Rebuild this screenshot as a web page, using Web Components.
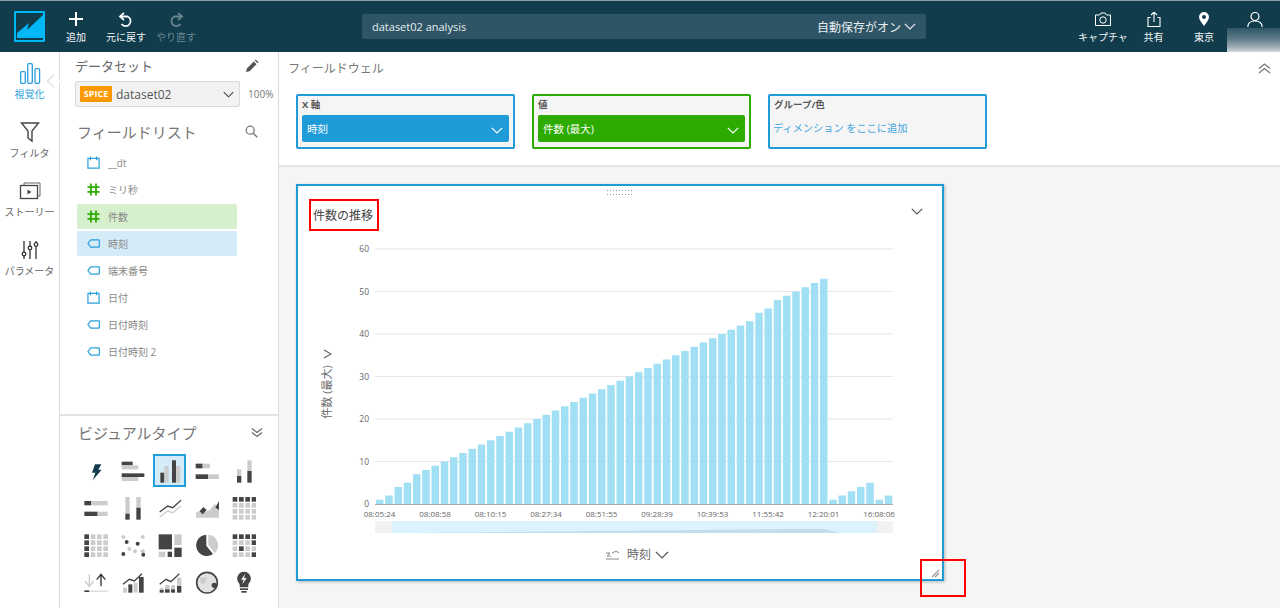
<!DOCTYPE html>
<html lang="ja">
<head>
<meta charset="utf-8">
<title>dataset02 analysis</title>
<style>
    html, body { margin: 0; height: 608px; overflow: hidden; background: #fff; }
    body { font-family: "Open Sans", "Noto Sans CJK JP", sans-serif; color: #555; }
</style>
</head>
<body>
<qs-app>
    <app-header slot="header">
        <header-btn icon="plus">追加</header-btn>
        <header-btn icon="undo">元に戻す</header-btn>
        <header-btn icon="redo" off>やり直す</header-btn>
        <title-bar slot="title">dataset02 analysis</title-bar>
        <header-btn slot="right" icon="camera">キャプチャ</header-btn>
        <header-btn slot="right" icon="share">共有</header-btn>
        <header-btn slot="right" icon="pin">東京</header-btn>
        <header-btn slot="right" icon="user"></header-btn>
    </app-header>
    <side-rail slot="rail">
        <rail-item icon="visual" active>視覚化</rail-item>
        <rail-item icon="filter">フィルタ</rail-item>
        <rail-item icon="story">ストーリー</rail-item>
        <rail-item icon="params">パラメータ</rail-item>
    </side-rail>
    <data-panel slot="panel">
        <field-row icon="date">__dt</field-row>
        <field-row icon="hash">ミリ秒</field-row>
        <field-row icon="hash" mark="green">件数</field-row>
        <field-row icon="tag" mark="blue">時刻</field-row>
        <field-row icon="tag">端末番号</field-row>
        <field-row icon="date">日付</field-row>
        <field-row icon="tag">日付時刻</field-row>
        <field-row icon="tag">日付時刻 2</field-row>
        <visual-types slot="visual"></visual-types>
    </data-panel>
    <field-wells slot="wells">
        <well-box label="X 軸" pill="時刻"></well-box>
        <well-box label="値" pill="件数 (最大)" green></well-box>
        <well-box label="グループ/色" hint="ディメンション をここに追加"></well-box>
    </field-wells>
    <chart-card slot="canvas">
        <note-box style="left:11px;top:13px;width:70px;height:32px"></note-box>
        <note-box style="left:622px;top:373px;width:46px;height:38px"></note-box>
    </chart-card>
</qs-app>

<script>
    function shadow(el, html) {
        el.attachShadow({ mode: 'open' }).innerHTML = html;
    }

    function chevron(w, color) {
        return `<svg width="${w}" height="${Math.round(w * 0.6)}" viewBox="0 0 12 7" fill="none" stroke="${color}" stroke-width="1.2"><path d="M.8 .8 6 6 11.2 .8"/></svg>`;
    }

    // icons of the top bar
    const topIcons = {
        plus: '<path d="M8 0v14M1 7h14" stroke-width="2"/>',
        undo: '<path d="M2.500 4.500H9.500a5 5 0 1 1-6 7.500" stroke-width="1.800"/><path d="M6 .8 2 4.500 6 8.200" stroke-width="1.800"/>',
        redo: '<path d="M13.500 4.500H6.500a5 5 0 1 0 6 7.500" stroke-width="1.800"/><path d="M10 .8 14 4.500 10 8.200" stroke-width="1.800"/>',
        camera: '<path d="M.5 3h4l1.500-2h4l1.500 2h4v10.500H.5z" stroke-width="1"/><circle cx="8" cy="8" r="3.200" stroke-width="1"/>',
        share: '<path d="M4.500 5.500H2v9h12v-9h-2.500M8 10V.5M5 3l3-3 3 3" stroke-width="1.100"/>',
        pin: '<path fill="#fff" stroke="none" fill-rule="evenodd" d="M8 0a5 5 0 0 1 5 5c0 3-3 6-5 9-2-3-5-6-5-9a5 5 0 0 1 5-5zm0 3a2 2 0 1 0 0 4 2 2 0 0 0 0-4z"/>',
        user: '<circle cx="8" cy="4.500" r="4" stroke-width="1.200"/><path d="M.8 15c0-4 3-6 7.200-6s7.200 2 7.200 6" stroke-width="1.200"/>'
    };

    // icons of the left rail, viewBox 24x24
    const railIcons = {
        visual: '<g fill="none" stroke="#2aa0dc" stroke-width="1.300"><rect x="2.700" y="10.700" width="4.600" height="11.600" rx="1"/><rect x="9.700" y="2.700" width="4.600" height="19.600" rx="1"/><rect x="17" y="7.700" width="4.600" height="14.600" rx="1"/></g>',
        filter: '<path d="M3.500 3h17l-6.500 8v10l-4-3v-7z" fill="none" stroke="#444" stroke-width="1.400"/>',
        story: '<path d="M6 6V4h16v13h-2" fill="none" stroke="#666" stroke-width="1"/><rect x="2.500" y="6.500" width="17" height="13" fill="none" stroke="#444" stroke-width="1.300"/><path d="M9.500 10.500v5l4-2.500z" fill="#444"/>',
        params: '<g fill="none" stroke="#333" stroke-width="1.300"><path d="M6 3v18M12 3v18M18 3v18"/><circle cx="6" cy="16" r="1.800" fill="#fff"/><circle cx="12" cy="10" r="1.800" fill="#fff"/><circle cx="18" cy="6.500" r="1.800" fill="#fff"/></g>'
    };

    // field type icons, viewBox 14x14
    const fieldIcons = {
        date: '<path d="M1 2.500h12v10.500H1zM3.700 .5v4M10.300 .5v4" fill="none" stroke="#2aa0dc" stroke-width="1.300"/>',
        hash: '<path d="M4.300 .5v13M9.700 .5v13M.5 4.500h13M.5 9.500h13" fill="none" stroke="#2eab00" stroke-width="1.900"/>',
        tag: '<path d="M4 3h8.500a.8 .8 0 0 1 .8 .8v6.400a.8 .8 0 0 1-.8 .8H4L1 7z" fill="none" stroke="#2aa0dc" stroke-width="1.300"/>'
    };

    class QsApp extends HTMLElement {
        constructor() {
            super();
            shadow(this, `<style>
                :host { display: flex; flex-direction: column; width: 1280px; height: 608px; }
                .body { flex: 1; display: flex; min-height: 0; }
                .main { flex: 1; display: flex; flex-direction: column; min-width: 0; }
                .canvas { flex: 1; background: #f5f5f5; padding: 17px; }
            </style>
            <slot name="header"></slot>
            <div class="body">
                <slot name="rail"></slot>
                <slot name="panel"></slot>
                <div class="main">
                    <slot name="wells"></slot>
                    <div class="canvas"><slot name="canvas"></slot></div>
                </div>
            </div>`);
        }
    }
    customElements.define('qs-app', QsApp);

    class AppHeader extends HTMLElement {
        constructor() {
            super();
            shadow(this, `<style>
                :host { display: flex; height: 51px; flex: none; background: #103c4c; border-top: 1px solid #8b9da3; position: relative; }
                .logo { width: 31px; height: 31px; margin: 10px 6px 0 14px; flex: none; }
                .left { display: flex; width: 150px; flex: none; }
                .mid { margin-left: 161px; width: 564px; flex: none; }
                .right { margin-left: auto; display: flex; }
                .blur { position: absolute; right: 0; top: 27px; width: 53px; height: 27px; background: linear-gradient(#2f5767 0%, #5d7b87 40%, #a9b8be 75%, #f4f6f7 100%); }
            </style>
            <svg class="logo" viewBox="0 0 31 31"><rect width="31" height="31" rx="1" fill="#00b8f5"/><rect x="2" y="2" width="27" height="27" fill="#103c4c"/><path d="M3 22 15 12l-2 7L29 4v23H3z" fill="#00b8f5"/></svg>
            <div class="left"><slot></slot></div>
            <div class="mid"><slot name="title"></slot></div>
            <div class="right"><slot name="right"></slot></div>
            <div class="blur"></div>`);
        }
    }
    customElements.define('app-header', AppHeader);

    class HeaderBtn extends HTMLElement {
        constructor() {
            super();
            const off = this.hasAttribute('off');
            const color = off ? '#6d8791' : '#fff';
            shadow(this, `<style>
                :host { display: flex; flex-direction: column; align-items: center; width: 50.6px; padding-top: 11px; font-size: 10px; line-height: 12px; color: ${off ? '#6d8791' : '#f2f5f6'}; white-space: nowrap; }
                svg { display: block; width: 16px; height: 16px; margin-bottom: 3px; }
            </style>
            <svg viewBox="0 0 16 16" fill="none" stroke="${color}">${topIcons[this.getAttribute('icon')]}</svg>
            <slot></slot>`);
        }
    }
    customElements.define('header-btn', HeaderBtn);

    class TitleBar extends HTMLElement {
        constructor() {
            super();
            shadow(this, `<style>
                :host { display: flex; align-items: center; height: 25px; margin-top: 13px; padding: 0 10px; background: #2e5565; border-radius: 2px; font-size: 11px; color: #e8eef0; }
                .save { margin-left: auto; display: flex; align-items: center; gap: 3px; font-size: 12px; }
            </style>
            <slot></slot>
            <span class="save">自動保存がオン ${chevron(12, '#e8eef0')}</span>`);
        }
    }
    customElements.define('title-bar', TitleBar);

    class SideRail extends HTMLElement {
        constructor() {
            super();
            shadow(this, `<style>
                :host { display: block; width: 59px; flex: none; padding-top: 5px; border-right: 1px solid #dcdcdc; box-sizing: content-box; position: relative; }
                .notch { position: absolute; right: -1px; top: 24px; width: 9px; height: 9px; background: #fff; border-left: 1px solid #dcdcdc; border-bottom: 1px solid #dcdcdc; transform: translateX(-1px) rotate(45deg); }
            </style>
            <slot></slot><div class="notch"></div>`);
        }
    }
    customElements.define('side-rail', SideRail);

    class RailItem extends HTMLElement {
        constructor() {
            super();
            shadow(this, `<style>
                :host { display: flex; flex-direction: column; align-items: center; height: 59px; font-size: 10px; line-height: 14px; white-space: nowrap; color: ${this.hasAttribute('active') ? '#2aa0dc' : '#666'}; }
                svg { display: block; width: 24px; height: 24px; margin: 4px 0 2px; }
            </style>
            <svg viewBox="0 0 24 24">${railIcons[this.getAttribute('icon')]}</svg>
            <slot></slot>`);
        }
    }
    customElements.define('rail-item', RailItem);

    class DataPanel extends HTMLElement {
        constructor() {
            super();
            shadow(this, `<style>
                :host { display: flex; flex-direction: column; width: 218px; flex: none; border-right: 1px solid #dcdcdc; box-sizing: content-box; }
                .head { display: flex; align-items: center; justify-content: space-between; height: 27px; margin-bottom: 2px; padding: 0 19px 0 15px; font-size: 13px; color: #666; }
                .row { display: flex; align-items: center; padding-left: 15px; }
                .select { width: 165px; height: 26px; box-sizing: border-box; display: flex; align-items: center; background: #f2f2f2; border: 1px solid #dadada; border-radius: 2px; padding: 0 5px 0 4px; font-size: 12px; color: #555; }
                .spice { background: #ff9900; color: #fff; font-size: 9px; font-weight: 700; line-height: 16px; width: 32px; text-align: center; border-radius: 1px; margin-right: 4px; }
                .select svg { margin-left: auto; }
                .pct { font-size: 10px; color: #777; margin-left: 8px; }
                .list-head { display: flex; align-items: center; justify-content: space-between; height: 43px; padding: 6px 20px 0 17px; font-size: 15px; color: #777; box-sizing: border-box; }
                .list { flex: 1; display: flex; flex-direction: column; gap: 2px; padding-left: 17px; }
            </style>
            <div class="head"><span>データセット</span>
                <svg width="14" height="14" viewBox="0 0 14 14"><path d="M1 13l.8-3.500 7-7 2.700 2.700-7 7zM9.800 1.500l1-1 2.700 2.700-1 1z" fill="#555"/></svg></div>
            <div class="row"><div class="select"><span class="spice">SPICE</span>dataset02 ${chevron(11, '#444')}</div><span class="pct">100%</span></div>
            <div class="list-head"><span>フィールドリスト</span>
                <svg width="13" height="13" viewBox="0 0 13 13" fill="none" stroke="#777" stroke-width="1.300"><circle cx="5.200" cy="5.200" r="4"/><path d="M8.200 8.200 12.300 12.300"/></svg></div>
            <div class="list"><slot></slot></div>
            <slot name="visual"></slot>`);
        }
    }
    customElements.define('data-panel', DataPanel);

    class FieldRow extends HTMLElement {
        constructor() {
            super();
            const bg = { green: '#d6efcc', blue: '#d4ebf8' }[this.getAttribute('mark')] || 'transparent';
            shadow(this, `<style>
                :host { display: flex; align-items: center; width: 160px; height: 25px; flex: none; padding-left: 10px; box-sizing: border-box; background: ${bg}; border-radius: 2px; font-size: 10px; color: #888; }
                svg { width: 13px; height: 13px; margin-right: 8px; flex: none; }
            </style>
            <svg viewBox="0 0 14 14">${fieldIcons[this.getAttribute('icon')]}</svg><slot></slot>`);
        }
    }
    customElements.define('field-row', FieldRow);

    // chart type gallery, all coordinates are in a 3x space (one cell = 111 units)
    const D = '#444', L = '#ccc';
    const r = (x1, y1, x2, y2, c) => `<rect x="${x1}" y="${y1}" width="${x2 - x1}" height="${y2 - y1}" fill="${c}"/>`;
    const dot = (x, y, c, s = 6) => `<circle cx="${x}" cy="${y}" r="${s}" fill="${c}"/>`;
    const line = (p, c, w = 4) => `<polyline points="${p}" fill="none" stroke="${c}" stroke-width="${w}"/>`;
    function tiles(x, y, darkTest) {
        let out = '';
        for (let row = 0; row < 4; row++) {
            for (let col = 0; col < 4; col++) {
                out += r(x + col * 19, y + row * 18, x + col * 19 + 14, y + row * 18 + 14, darkTest(row, col) ? D : L);
            }
        }
        return out;
    }
    const visuals = [
        '<path d="M102 160H121L112 176H122L95 208 103 185H93z" fill="#103c4c"/>',
        r(182, 152, 215, 163, D) + r(182, 163, 232, 175, L) + r(182, 187, 250, 198, D) + r(182, 198, 232, 210, L),
        r(298, 185, 310, 215, D) + r(310, 165, 323, 215, L) + r(333, 148, 345, 215, D) + r(345, 165, 358, 215, L),
        r(404, 158, 425, 172, D) + r(425, 158, 447, 172, L) + r(404, 190, 442, 204, D) + r(442, 190, 474, 204, L),
        r(528, 175, 541, 195, L) + r(528, 195, 541, 215, D) + r(559, 148, 572, 180, L) + r(559, 180, 572, 215, D),

        r(70, 270, 90, 283, D) + r(90, 270, 140, 283, L) + r(70, 302, 110, 315, D) + r(110, 302, 140, 315, L),
        r(193, 258, 206, 308, L) + r(193, 308, 206, 326, D) + r(226, 258, 239, 290, L) + r(226, 290, 239, 326, D),
        line('296,303 320,285 335,290 360,268', D) + line('296,318 320,300 335,305 360,285', L),
        '<path d="M405 320v-15l15-8 12 6 15-7 13-16 15 4v36z" fill="#ccc"/><path d="M427 288l10 9-12 13-9-9zM463 290l11-20v26z" fill="#444"/>',
        tiles(515, 258, row => row === 0),

        tiles(70, 370, (row, col) => col === 0),
        dot(187, 378, L) + dot(245, 378, L) + dot(197, 393, D) + dot(230, 398, D) + dot(205, 414, L) + dot(245, 421, L) + dot(187, 429, D) + dot(222, 421, L) + dot(247, 431, D),
        r(293, 370, 333, 415, D) + r(340, 370, 362, 402, L) + r(293, 422, 313, 438, L) + r(320, 422, 333, 438, D) + r(340, 410, 362, 438, D),
        '<path d="M442 371a32 32 0 0 1 19 55l-19-24z" fill="#ccc"/><path d="M436 371a32 32 0 1 0 20 58l-20-25z" fill="#444"/>',
        tiles(515, 370, (row, col) => row === 0 || (row === 1 && col === 3) || (row === 2 && col === 1) || (row === 3 && col === 3)),

        '<path d="M85 490v36M72 510l13 16 13-16" fill="none" stroke="#ccc" stroke-width="4"/><path d="M120 526v-36M107 506l13-16 13 16" fill="none" stroke="#333" stroke-width="4"/>' + r(70, 538, 85, 543, D) + r(85, 539, 140, 542, L),
        line('186,520 205,505 220,510 243,488', D) + r(186, 530, 198, 545, L) + r(202, 520, 214, 545, D) + r(218, 515, 230, 545, L) + r(234, 498, 248, 545, D),
        line('296,520 315,505 330,512 355,488', D) + r(296, 530, 308, 537, L) + r(296, 537, 308, 545, D) + r(312, 522, 326, 535, L) + r(312, 535, 326, 545, D) + r(330, 522, 342, 535, L) + r(330, 535, 342, 545, D) + r(348, 500, 361, 525, L) + r(348, 525, 361, 545, D),
        '<circle cx="438" cy="515" r="31" fill="#e2e2e2" stroke="#444" stroke-width="5"/><path d="M415 500h24l-6 16-12 2z" fill="#ccc"/>' + dot(460, 523, D, 8),
        '<path d="M549 482a21 21 0 0 1 13 37v10h-26v-10a21 21 0 0 1 13-37z" fill="#444"/><path d="M553 488 540 506h8l-4 14 13-19h-8z" fill="#fff"/>' + r(537, 532, 561, 537, D) + r(541, 540, 557, 545, D)
    ];

    class VisualTypes extends HTMLElement {
        constructor() {
            super();
            const cells = visuals.map((v, i) => {
                const cx = 105 + (i % 5) * 111, cy = 180 + Math.floor(i / 5) * 111;
                return `<div class="cell${i === 2 ? ' on' : ''}"><svg viewBox="${cx - 36} ${cy - 36} 72 72">${v}</svg></div>`;
            }).join('');
            shadow(this, `<style>
                :host { display: block; height: 192px; border-top: 2px solid #e4e4e4; }
                .head { display: flex; align-items: center; justify-content: space-between; height: 32px; margin-bottom: 4px; padding: 0 15px 0 18px; font-size: 15px; color: #777; box-sizing: border-box; }
                .grid { display: grid; grid-template-columns: repeat(5, 37px); grid-auto-rows: 37px; margin-left: 17px; place-items: center; }
                .cell { width: 33px; height: 33px; box-sizing: border-box; display: flex; align-items: center; justify-content: center; }
                .on { background: #d5ecf8; border: 2px solid #1fa0dc; }
                svg { width: 24px; height: 24px; flex: none; }
            </style>
            <div class="head"><span>ビジュアルタイプ</span>
                <svg width="12" height="11" style="width:12px;height:11px" viewBox="0 0 12 11" fill="none" stroke="#666" stroke-width="1.200"><path d="M1 1.500 6 5.500 11 1.500M1 5.500 6 9.500 11 5.500"/></svg></div>
            <div class="grid">${cells}</div>`);
        }
    }
    customElements.define('visual-types', VisualTypes);

    class FieldWells extends HTMLElement {
        constructor() {
            super();
            shadow(this, `<style>
                :host { display: block; height: 113px; flex: none; background: #fff; border-bottom: 2px solid #e4e4e4; position: relative; }
                .head { display: flex; align-items: center; justify-content: space-between; height: 32px; padding: 0 9px 0 9px; font-size: 12px; color: #777; }
                .wells { display: flex; gap: 17px; padding: 10px 0 0 17px; }
            </style>
            <div class="head"><span>フィールドウェル</span>
                <svg width="13" height="11" viewBox="0 0 13 11" fill="none" stroke="#777" stroke-width="1.300"><path d="M1 5.500 6.500 1 12 5.500M1 10 6.500 5.500 12 10"/></svg></div>
            <div class="wells"><slot></slot></div>`);
        }
    }
    customElements.define('field-wells', FieldWells);

    class WellBox extends HTMLElement {
        constructor() {
            super();
            const color = this.hasAttribute('green') ? '#2eab00' : '#1f9cd8';
            const pill = this.getAttribute('pill');
            const hint = this.getAttribute('hint');
            shadow(this, `<style>
                :host { display: block; width: 219px; height: 55px; box-sizing: border-box; border: 2px solid ${color}; border-radius: 2px; background: #f5f5f5; padding: 2px 4px 0; }
                .label { font-size: 9.500px; line-height: 14px; font-weight: 700; color: #555; height: 17px; }
                .pill { display: flex; align-items: center; justify-content: space-between; height: 27px; padding: 0 6px 0 5px; background: ${color}; border-radius: 2px; color: #fff; font-size: 10.500px; }
                .pill svg { margin-top: 4px; }
                .hint { font-size: 10.200px; color: #45a6dc; line-height: 27px; margin-left: -1px; }
            </style>
            <div class="label">${this.getAttribute('label')}</div>
            ${pill ? `<div class="pill"><span>${pill}</span>${chevron(12, '#fff')}</div>` : `<div class="hint">${hint}</div>`}`);
        }
    }
    customElements.define('well-box', WellBox);

    class ChartCard extends HTMLElement {
        constructor() {
            super();
            shadow(this, `<style>
                :host { display: block; position: relative; width: 648px; height: 397px; box-sizing: border-box; border: 2px solid #1f9cd8; background: #fff; box-shadow: 1px 1px 3px rgba(0,0,0,.25); }
                .grip { display: grid; grid-template-columns: repeat(9, 1px); gap: 1px 2px; justify-content: center; padding: 4px 2px 0 0; height: 7px; box-sizing: content-box; }
                .grip i { background: #999; height: 1px; }
                .title { display: flex; align-items: center; justify-content: space-between; height: 39px; padding: 0 19px 5px 15px; box-sizing: border-box; font-size: 12px; color: #444; margin-top: 1px; }
                .title svg { margin-bottom: 8px; }
                .resize { position: absolute; right: 2px; bottom: 1px; width: 9px; height: 9px; }
            </style>
            <div class="grip">${'<i></i>'.repeat(18)}</div>
            <div class="title"><span>件数の推移</span>${chevron(12, '#555')}</div>
            <bar-chart></bar-chart>
            <svg class="resize" viewBox="0 0 9 9" stroke="#999" stroke-width="1.300"><path d="M1 8 8 1M4 8 8 4"/></svg>
            <slot></slot>`);
        }
    }
    customElements.define('chart-card', ChartCard);

    class NoteBox extends HTMLElement {
        constructor() {
            super();
            shadow(this, `<style>
                :host { display: block; position: absolute; box-sizing: border-box; border: 2px solid #f00; }
            </style>`);
        }
    }
    customElements.define('note-box', NoteBox);

    // counts read off the reference, one per bar
    const counts = [1, 2, 4, 5, 7, 8, 9, 10, 11, 12, 13, 14, 15, 16, 17, 18, 19, 20, 21, 22, 23, 24, 25, 26, 27, 28, 29, 30, 31, 32, 33, 34, 35, 36, 37, 38, 39, 40, 41, 42, 43, 45, 46, 48, 49, 50, 51, 52, 53, 1, 2, 3, 4, 5, 1, 2];
    const timeLabels = ['08:05:24', '08:08:58', '08:10:15', '08:27:34', '08:51:55', '09:28:39', '10:39:53', '11:55:42', '12:20:01', '16:08:06'];

    class BarChart extends HTMLElement {
        constructor() {
            super();
            const base = 504, unit = 4.25;
            let grid = '', bars = '', xText = '';
            for (let v = 0; v <= 60; v += 10) {
                const y = base - v * unit;
                if (v) grid += `<line x1="375" x2="893" y1="${y}" y2="${y}" stroke="#e6e6e6" stroke-width="1.200"/>`;
                grid += `<text class="y" x="369" y="${y + 3}" text-anchor="end">${v}</text>`;
            }
            counts.forEach((c, i) => {
                const h = c * unit;
                bars += `<rect x="${376 + i * 9.25}" y="${base - h}" width="7.500" height="${h}" fill="#a0dff4"/>`;
            });
            timeLabels.forEach((t, i) => {
                xText += `<text x="${379.500 + i * 55.500}" y="517" text-anchor="middle">${t}</text>`;
            });
            shadow(this, `<style>
                :host { display: block; }
                svg { display: block; }
                text { font-size: 8px; fill: #666; }
                .y { font-size: 8.500px; }
                .axis { font-size: 11px; }
                .axis-x { font-size: 12px; }
            </style>
            <svg width="644" height="338" viewBox="298 237 644 338">
                ${grid}${bars}
                <line x1="375" x2="893" y1="504.500" y2="504.500" stroke="#aaa" stroke-width="1"/>
                ${xText}
                <rect x="375" y="521" width="518" height="12" fill="#f2f2f2"/>
                <rect x="392" y="521" width="485" height="12" fill="#dcf2fd"/>
                <path d="M405 533 500 532 600 531 700 530 790 529 825 529 836 532 840 533z" fill="#c5dde9"/>
                <text class="axis" transform="translate(331 392) rotate(-90)" text-anchor="middle">件数 (最大)</text>
                <path d="M324 350 331 354 324 358" fill="none" stroke="#666" stroke-width="1.100"/>
                <path d="M606 553h4l-3 3h4M612 553l4-2 3 2M606 559h13" fill="none" stroke="#888" stroke-width="1"/>
                <text class="axis-x" x="627" y="559">時刻</text>
                <path d="M656 552 662 558 668 552" fill="none" stroke="#555" stroke-width="1.200"/>
            </svg>`);
        }
    }
    customElements.define('bar-chart', BarChart);
</script>
</body>
</html>
